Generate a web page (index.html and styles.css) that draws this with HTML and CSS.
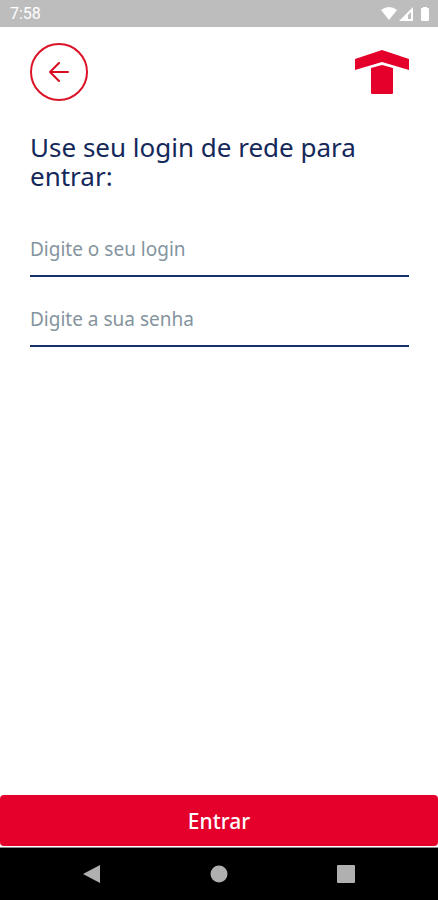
FILE: index.html
```html
<!DOCTYPE html>
<html lang="pt-BR">
<head>
  <meta charset="UTF-8">
  <meta name="viewport" content="width=device-width, initial-scale=1">
  <title>Entrar</title>
  <link rel="stylesheet" href="styles.css">
</head>
<body>
  <div class="status-bar">
    <span>7:58</span>
    <svg class="status-icons" width="50" height="16" viewBox="0 0 50 16" fill="#fff">
      <path d="M1 4 Q9 -2 17 4 L9 14 Z"/>
      <path fill-rule="evenodd" d="M33 1 V15 H19 Z M31 6 L28 9 V13 H31 Z"/>
      <path d="M43 1 h4 v1 h1 q1 0 1 1 v11 q0 1 -1 1 h-6 q-1 0 -1 -1 v-11 q0 -1 1 -1 h1 z"/>
    </svg>
  </div>

  <header class="header">
    <button type="button" class="back" aria-label="Voltar">
      <svg width="20" height="20" viewBox="0 0 20 20" fill="none" stroke="#d90d20" stroke-width="2" stroke-linecap="round" stroke-linejoin="round">
        <path d="M19 10 H1 M10 1 L1 10 L10 19"/>
      </svg>
    </button>
    <svg class="logo" width="54" height="44" viewBox="0 0 54 44" fill="#e4002b">
      <path d="M0 9 L27 0 L54 9 V20 L27 12 L0 20 Z"/>
      <path d="M16 18 L27 15 L38 18 V43 Q38 44 37 44 H17 Q16 44 16 43 Z"/>
    </svg>
  </header>

  <form class="login" id="loginForm">
    <div class="fields">
      <h1>Use seu login de rede para entrar:</h1>
      <input type="text" name="login" placeholder="Digite o seu login" aria-label="Digite o seu login">
      <input type="password" name="senha" placeholder="Digite a sua senha" aria-label="Digite a sua senha">
    </div>
    <button type="submit" class="submit">Entrar</button>
  </form>

  <nav class="nav-bar">
    <svg width="18" height="18" viewBox="0 0 18 18" fill="#b0b0b0"><path d="M17 0 V18 L0 9 Z"/></svg>
    <svg width="18" height="18" viewBox="0 0 18 18" fill="#b0b0b0"><circle cx="9" cy="9" r="8.5"/></svg>
    <svg width="18" height="18" viewBox="0 0 18 18" fill="#b0b0b0"><rect width="18" height="18" rx="1"/></svg>
  </nav>
</body>
</html>
```
FILE: styles.css
```css
* {
  box-sizing: border-box;
}

body {
  margin: 0;
  min-height: 100vh;
  display: flex;
  flex-direction: column;
  font-family: 'Noto Sans', sans-serif;
  background-color: #fff;
}

.status-bar {
  display: flex;
  justify-content: space-between;
  align-items: center;
  height: 27px;
  padding: 0 8px 0 10px;
  background-color: #bdbdbd;
  color: #fff;
  font-family: Roboto, sans-serif;
  font-size: 16px;
}

.header {
  display: flex;
  justify-content: space-between;
  align-items: center;
  padding: 16px 29px 0 30px;
}

.back {
  display: flex;
  align-items: center;
  justify-content: center;
  width: 58px;
  height: 58px;
  padding: 0;
  border: 2px solid #dc1428;
  border-radius: 50%;
  background: none;
  cursor: pointer;
}

.login {
  flex: 1;
  display: flex;
  flex-direction: column;
  justify-content: space-between;
}

.fields {
  padding: 32px 29px 0 30px;
}

h1 {
  margin: 0 0 32px;
  color: #14285a;
  font-size: 26px;
  font-weight: 400;
  line-height: 29px;
}

input {
  display: block;
  width: 100%;
  height: 54px;
  margin-bottom: 16px;
  padding: 0;
  border: none;
  border-bottom: 2px solid #14306a;
  border-radius: 0;
  outline: none;
  background: none;
  color: #14285a;
  font-family: inherit;
  font-size: 19px;
}

input::placeholder {
  color: #84949e;
  opacity: 1;
}

.submit {
  width: 100%;
  height: 51px;
  margin-bottom: 1px;
  border: none;
  border-radius: 4px;
  background-color: #e4002b;
  color: #fff;
  font-family: inherit;
  font-size: 21px;
  font-weight: 500;
  cursor: pointer;
}

.nav-bar {
  display: flex;
  justify-content: space-between;
  align-items: center;
  height: 53px;
  padding: 0 19%;
  border-top: 1px solid #8c8c8c;
  background-color: #000;
}
```
